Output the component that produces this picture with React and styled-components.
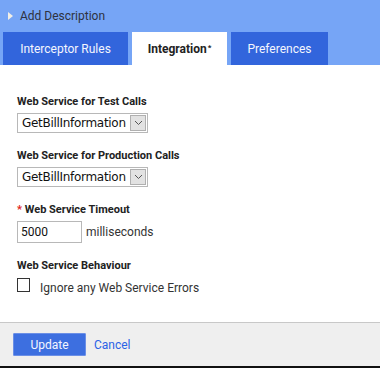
import React from "react";
import styled, { createGlobalStyle } from "styled-components";

const GlobalStyle = createGlobalStyle`
  html, body {
    margin: 0;
    padding: 0;
    background: #fff;
  }
  body {
    font-family: Roboto, "Liberation Sans", sans-serif;
    color: #222;
  }
`;

function Chevron() {
  return (
    <svg width="9" height="6" viewBox="0 0 9 6">
      <path d="M1 1 L4.5 4.5 L8 1" stroke="#555" strokeWidth="1" fill="none" />
    </svg>
  );
}

function App() {
  return (
    <>
      <GlobalStyle />
      <Panel>
        <Header>
          <Title>
            <Arrow />
            Add Description
          </Title>
          <Tabs>
            <Tab width={125}>Interceptor Rules</Tab>
            <Tab width={95} active>
              Integration<Star>*</Star>
            </Tab>
            <Tab width={97}>Preferences</Tab>
          </Tabs>
        </Header>
        <Body>
          <Field>
            <Label>Web Service for Test Calls</Label>
            <Select>
              <SelectText>GetBillInformation</SelectText>
              <SelectButton>
                <Chevron />
              </SelectButton>
            </Select>
          </Field>
          <Field>
            <Label>Web Service for Production Calls</Label>
            <Select>
              <SelectText>GetBillInformation</SelectText>
              <SelectButton>
                <Chevron />
              </SelectButton>
            </Select>
          </Field>
          <Field>
            <Label>
              <Required>*</Required> Web Service Timeout
            </Label>
            <Row>
              <Input>5000</Input>
              <Unit>milliseconds</Unit>
            </Row>
          </Field>
          <Field>
            <Label>Web Service Behaviour</Label>
            <CheckRow>
              <Checkbox />
              <CheckLabel>Ignore any Web Service Errors</CheckLabel>
            </CheckRow>
          </Field>
        </Body>
        <Footer>
          <Button>Update</Button>
          <LinkBtn>Cancel</LinkBtn>
        </Footer>
      </Panel>
    </>
  );
}

const Panel = styled.div`
  width: 380px;
  height: 368px;
  display: flex;
  flex-direction: column;
  border-bottom: 2px solid #111;
  box-sizing: border-box;
`;

const Header = styled.div`
  background: #76a5f6;
  height: 65px;
  display: flex;
  flex-direction: column;
`;

const Title = styled.div`
  height: 32px;
  display: flex;
  align-items: center;
  padding-left: 8px;
  font-size: 12px;
  color: #2e3240;
`;

const Arrow = styled.span`
  width: 0;
  height: 0;
  border-top: 4px solid transparent;
  border-bottom: 4px solid transparent;
  border-left: 5px solid #f2efe6;
  margin-right: 7px;
`;

const Tabs = styled.div`
  display: flex;
  gap: 4px;
  padding-left: 3px;
  height: 33px;
`;

const Tab = styled.div`
  width: ${(p) => p.width}px;
  display: flex;
  align-items: center;
  justify-content: center;
  white-space: nowrap;
  font-size: 12px;
  font-weight: ${(p) => (p.active ? 700 : 400)};
  color: ${(p) => (p.active ? "#222" : "#f4f6fe")};
  background: ${(p) => (p.active ? "#fff" : "#3265dc")};
`;

const Star = styled.span`
  font-size: 8px;
  align-self: flex-start;
  margin-top: 11px;
  margin-left: 1px;
`;

const Body = styled.div`
  flex: 1;
  padding: 30px 17px 0;
  display: flex;
  flex-direction: column;
  gap: 16px;
`;

const Field = styled.div`
  display: flex;
  flex-direction: column;
  gap: 4px;
`;

const Label = styled.div`
  font-size: 11px;
  font-weight: 700;
  color: #222;
  line-height: 14px;
`;

const Required = styled.span`
  color: #e02020;
`;

const Select = styled.div`
  display: flex;
  align-items: center;
  width: 131px;
  height: 20px;
  border: 1px solid #b8b8b8;
  box-sizing: border-box;
  background: #fff;
`;

const SelectText = styled.span`
  flex: 1;
  padding-left: 4px;
  font-family: "DejaVu Sans", Verdana, sans-serif;
  font-size: 12px;
  color: #111;
  letter-spacing: -0.3px;
  white-space: nowrap;
`;

const SelectButton = styled.span`
  width: 16px;
  height: 16px;
  margin-right: 1px;
  background: #e2e2e2;
  border: 1px solid #b0b0b0;
  box-sizing: border-box;
  display: flex;
  align-items: center;
  justify-content: center;
`;

const Row = styled.div`
  display: flex;
  align-items: center;
`;

const Input = styled.div`
  width: 65px;
  height: 22px;
  border: 1px solid #b8b8b8;
  box-sizing: border-box;
  padding-left: 3px;
  display: flex;
  align-items: center;
  font-size: 12px;
  color: #111;
`;

const Unit = styled.span`
  margin-left: 4px;
  font-size: 12px;
  color: #333;
`;

const CheckRow = styled.div`
  display: flex;
  align-items: flex-start;
  padding-top: 1px;
`;

const Checkbox = styled.span`
  width: 13px;
  height: 14px;
  border: 1px solid #333;
  box-sizing: border-box;
  background: #fff;
`;

const CheckLabel = styled.span`
  margin-left: 10px;
  margin-top: 3px;
  font-size: 12px;
  line-height: 14px;
  color: #333;
`;

const Footer = styled.div`
  height: 43px;
  background: #efefef;
  border-top: 1px solid #c8c8c8;
  display: flex;
  align-items: center;
  padding-left: 13px;
  gap: 8px;
`;

const Button = styled.div`
  width: 73px;
  height: 23px;
  background: #3d6fe0;
  border: 1px solid #6b8fe6;
  box-sizing: border-box;
  color: #f4f6ff;
  font-size: 12px;
  display: flex;
  align-items: center;
  justify-content: center;
  border-radius: 1px;
`;

const LinkBtn = styled.span`
  color: #2a62e6;
  font-size: 12px;
`;

export default App;
